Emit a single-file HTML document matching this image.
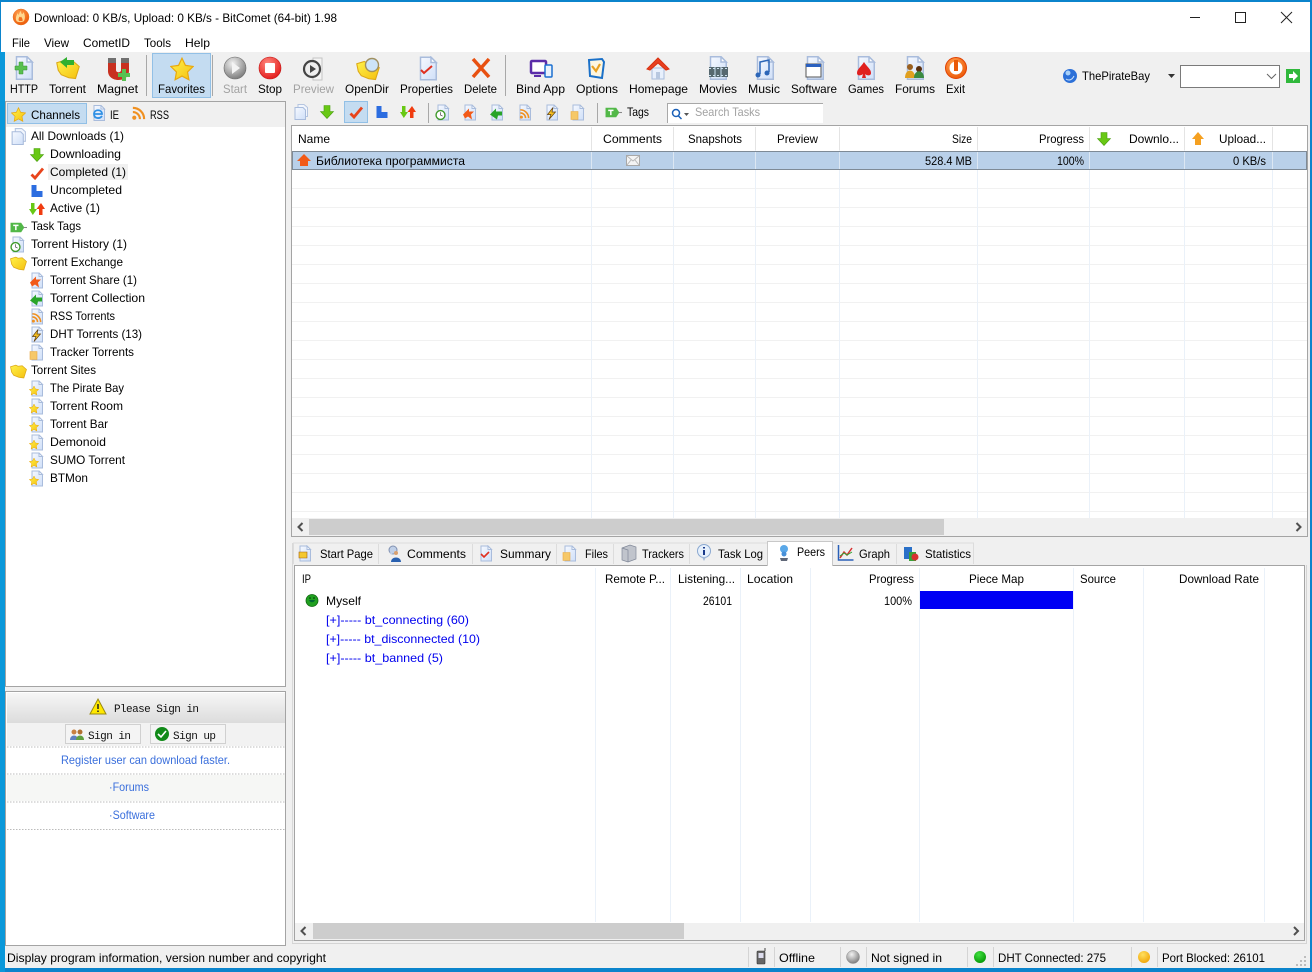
<!DOCTYPE html>
<html lang="en"><head><meta charset="utf-8"><title>BitComet</title>
<style>
html,body{margin:0;padding:0;background:#0b84cc;width:1312px;height:972px;overflow:hidden}
svg{display:block}
text{font-family:"Liberation Sans","Noto Sans CJK SC",sans-serif;font-size:12px;fill:#000}
.g{fill:#a2a2a2}
.b{fill:#0000ee}
.l{fill:#3a6fdc;font-family:"Liberation Sans",sans-serif;font-size:12px}
.m{font-family:"Liberation Mono","Liberation Sans",monospace;font-size:11px;fill:#111}
</style></head><body>
<svg xmlns="http://www.w3.org/2000/svg" width="1312" height="972" viewBox="0 0 1312 972">
<defs>
<linearGradient id="hd" x1="0" y1="0" x2="0" y2="1"><stop offset="0" stop-color="#f6f6f6"/><stop offset="1" stop-color="#dcdcdc"/></linearGradient>
<linearGradient id="pf" x1="0" y1="0" x2="1" y2="1"><stop offset="0" stop-color="#f6f9ff"/><stop offset="1" stop-color="#cfdff8"/></linearGradient>
<radialGradient id="rg" cx=".4" cy=".3" r=".8"><stop offset="0" stop-color="#f2f2f2"/><stop offset="1" stop-color="#6e6e6e"/></radialGradient>
<radialGradient id="rr" cx=".4" cy=".3" r=".8"><stop offset="0" stop-color="#ff8a80"/><stop offset="1" stop-color="#e01010"/></radialGradient>
<radialGradient id="ro" cx=".4" cy=".3" r=".8"><stop offset="0" stop-color="#ffa050"/><stop offset="1" stop-color="#ea5200"/></radialGradient>
<radialGradient id="ry" cx=".4" cy=".3" r=".8"><stop offset="0" stop-color="#ffe060"/><stop offset="1" stop-color="#f0a000"/></radialGradient>
<radialGradient id="rn" cx=".4" cy=".3" r=".8"><stop offset="0" stop-color="#40e040"/><stop offset="1" stop-color="#009000"/></radialGradient>
<linearGradient id="fy" x1="0" y1="0" x2="1" y2="1"><stop offset="0" stop-color="#fff24a"/><stop offset="1" stop-color="#f5c010"/></linearGradient>
<symbol id="pg" viewBox="0 0 16 16"><path d="M3 .5h7l3.500 3.500v11.500H3z" fill="url(#pf)" stroke="#a9bcdc"/><path d="M10 .5V4h3.500z" fill="#fff" stroke="#a9bcdc"/></symbol>
<symbol id="pg2" viewBox="0 0 16 16"><path d="M5 .5h6l3.500 3v9H5z" fill="#f2f6fd" stroke="#b5c5e0"/><path d="M2 3.500h8l2.500 2.500v9.500H2z" fill="url(#pf)" stroke="#a9bcdc"/></symbol>
<symbol id="dn" viewBox="0 0 16 16"><path d="M5 1.500h6v6h3.500L8 14.500 1.500 7.500H5z" fill="#68c814" stroke="#4a9e10" stroke-width=".6"/></symbol>
<symbol id="up" viewBox="0 0 16 16"><path d="M5 14.500h6v-6h3.500L8 1.500 1.500 8.500H5z" fill="#ff5a10" stroke="#d84000" stroke-width=".6"/></symbol>
<symbol id="chk" viewBox="0 0 16 16"><path d="M2.500 9.500l3.500 3.500L14 3.500" fill="none" stroke="#e8441c" stroke-width="2.800"/></symbol>
<symbol id="blk" viewBox="0 0 16 16"><path d="M2.500 2h5v6h6v6h-11z" fill="#2c6de0"/></symbol>
<symbol id="ar2" viewBox="0 0 16 16"><path d="M2 2h3.500v6H8L3.800 14 0 8h2z" fill="#68c814"/><path d="M10 14h3.500V8H16l-4-6-4.500 6H10z" fill="#f03c10"/></symbol>
<symbol id="star" viewBox="0 0 16 16"><path d="M8 .8l2.300 4.800 5.200.7-3.800 3.700.9 5.200L8 12.700l-4.600 2.500.9-5.200L.5 6.300l5.200-.7z" fill="url(#fy)" stroke="#e8a810" stroke-width=".8"/></symbol>
<symbol id="fold" viewBox="0 0 16 16"><path d="M.5 4.500l5-1.500 2 1 4-.5L15.500 7l-2.500 8-4.500-.5-5-2-2-3z" fill="url(#fy)" stroke="#dca818" stroke-width=".7"/></symbol>
<symbol id="tag" viewBox="0 0 16 16"><path d="M.5 3.500h10l3 4.500-3 4.500H.5z" fill="#52b848"/><path d="M3 6h5M5.500 6v4.500" stroke="#fff" stroke-width="1.400"/><path d="M13 8h3" stroke="#888"/></symbol>
<symbol id="clk" viewBox="0 0 16 16"><circle cx="8" cy="8" r="6.500" fill="#fff" stroke="#3f9a2a" stroke-width="2"/><path d="M8 4v4l3 1.500" fill="none" stroke="#444"/></symbol>
<symbol id="rss" viewBox="0 0 16 16"><circle cx="3.500" cy="12.500" r="2.200" fill="#f09020"/><path d="M2 6.500a7.500 7.500 0 0 1 7.500 7.500M2 2a12 12 0 0 1 12 12" fill="none" stroke="#f09020" stroke-width="2.300"/></symbol>
<symbol id="pgclk" viewBox="0 0 16 16"><use href="#pg"/><use href="#clk" x="0" y="5" width="11" height="11"/></symbol>
<symbol id="pgsh" viewBox="0 0 16 16"><use href="#pg"/><path d="M1 10l6-6v3h5l-3 3 1 5-4-3-3 2z" fill="#f25a18"/></symbol>
<symbol id="pgco" viewBox="0 0 16 16"><use href="#pg"/><path d="M1 10l6-6v3h6v4H9l-1 4z" fill="#28a428"/></symbol>
<symbol id="pgrs" viewBox="0 0 16 16"><use href="#pg"/><use href="#rss" x="2" y="4" width="11" height="11"/></symbol>
<symbol id="pgbo" viewBox="0 0 16 16"><use href="#pg"/><path d="M9 3L3.500 10H7L5 15l6.500-7.500H8z" fill="#f6c020" stroke="#604010" stroke-width=".7"/></symbol>
<symbol id="pgtr" viewBox="0 0 16 16"><use href="#pg"/><path d="M1 7h7v8H1z" fill="#f6c868" stroke="#e8a840" stroke-width=".6"/></symbol>
<symbol id="pgst" viewBox="0 0 16 16"><use href="#pg"/><use href="#star" x="0" y="5" width="10" height="10"/></symbol>
</defs>

<!-- window -->
<rect width="1312" height="972" fill="#0b84cc"/>
<rect x="0" y="50" width="5" height="922" fill="#0a98da"/>
<rect x="1" y="2" width="1309" height="50" fill="#fff"/>
<rect x="5" y="52" width="1305" height="916" fill="#f0f0f0"/>

<!-- title -->
<circle cx="21" cy="17" r="8" fill="url(#ro)" stroke="#e87020" stroke-width=".5"/>
<path d="M16.500 21c-1.500-3 0-5 1-8 .5 1.500 1 2 1.500 1.500.5-2 1-3 2-3.500 0 2 .5 3 1.500 3 .5-1 1-1.500 1-2 1.500 3 2 6 .5 9-2 1.500-6 1.500-7.500 0z" fill="#ffd890"/>
<path d="M19 21c-1-2 0-3 .5-4.500.5 1 1 1 1.500 0 .5 1 2 2 1.500 4.500z" fill="#f27020"/>
<text x="34" y="22" textLength="303" lengthAdjust="spacingAndGlyphs">Download: 0 KB/s, Upload: 0 KB/s - BitComet (64-bit) 1.98</text>
<path d="M1190 17.500h10" stroke="#222"/>
<rect x="1235.500" y="12.500" width="10" height="10" fill="none" stroke="#222"/>
<path d="M1281 12l11 11M1292 12l-11 11" stroke="#222"/>

<!-- menu -->
<text x="12" y="47" textLength="18" lengthAdjust="spacingAndGlyphs">File</text>
<text x="44" y="47" textLength="25" lengthAdjust="spacingAndGlyphs">View</text>
<text x="83" y="47" textLength="47" lengthAdjust="spacingAndGlyphs">CometID</text>
<text x="144" y="47" textLength="27" lengthAdjust="spacingAndGlyphs">Tools</text>
<text x="185" y="47" textLength="25" lengthAdjust="spacingAndGlyphs">Help</text>

<!-- main toolbar -->
<rect x="152.500" y="53.500" width="58" height="44" fill="#c4dcf1" stroke="#92c0e6"/>
<path d="M146.500 55v41M212.500 55v41M505.500 55v41" stroke="#a8a8a8"/>
<use href="#pg" x="12" y="56" width="24" height="24"/>
<path d="M19 62h4v4h4v4h-4v4h-4v-4h-4v-4h4z" fill="#58c050" stroke="#389030" stroke-width=".5"/>
<use href="#fold" x="56" y="56" width="24" height="24"/>
<path d="M60 62l7-5v3h7v5h-7v3z" fill="#30b030"/>
<path d="M108 58h8v12c0 3 5 3 5 0V58h8v13c0 12-21 12-21 0z" fill="#c83020"/>
<path d="M108 58h8v5h-8zM121 58h8v5h-8z" fill="#707070"/>
<path d="M122 69h4v4h4v4h-4v4h-4v-4h-4v-4h4z" fill="#58c050"/>
<use href="#star" x="170" y="57" width="24" height="24"/>
<circle cx="235" cy="68" r="11" fill="url(#rg)" stroke="#666" stroke-width=".6"/>
<path d="M232 62l8 6-8 6z" fill="#f4f4f4"/>
<circle cx="270" cy="68" r="11" fill="url(#rr)" stroke="#c01010" stroke-width=".6"/>
<rect x="265" y="63" width="10" height="10" rx="1" fill="#fff"/>
<path d="M313 58h9v22h-9z" fill="#f4f4f4" stroke="#c4c4c4"/>
<circle cx="312" cy="69" r="8" fill="#eee" stroke="#444" stroke-width="2.200"/>
<path d="M310 65l6 4-6 4z" fill="#444"/>
<use href="#fold" x="356" y="57" width="24" height="24"/>
<circle cx="372" cy="65" r="6.500" fill="#cde4f8" stroke="#a09060" stroke-width="1.400"/>
<use href="#pg" x="416" y="56" width="24" height="25"/>
<path d="M421 70l3 3 8-7" fill="none" stroke="#e03020" stroke-width="2"/>
<path d="M473 59l16 18M489 59l-16 18" stroke="#e85010" stroke-width="3.500"/>
<rect x="531" y="61" width="15" height="12" rx="1" fill="#fff" stroke="#5a2ca8" stroke-width="2.500"/>
<path d="M534 76h7" stroke="#5a2ca8" stroke-width="2"/>
<rect x="545" y="65" width="7" height="12" rx="1" fill="#e8f2fc" stroke="#1a6fd0" stroke-width="1.500"/>
<path d="M589 60l13-1 2 3-2 16-12-2z" fill="#fdf6e0" stroke="#1a70c8" stroke-width="2"/>
<path d="M592 66l4 5 4-7" fill="none" stroke="#e8a020" stroke-width="2.200"/>
<path d="M652 68h12v11h-12z" fill="#e8f0fc" stroke="#a9bcdc"/>
<path d="M656 72h4v7h-4z" fill="#b8c8e0"/>
<path d="M647 69l11-11 11 11-3 1-8-7-8 7z" fill="#e84020" stroke="#d83010"/>
<use href="#pg" x="706" y="56" width="24" height="24"/>
<rect x="709" y="67" width="19" height="10" fill="#56686f"/><path d="M715 67v10M721 67v10" stroke="#c8e0f0"/><path d="M709 68.500h19M709 75.500h19" stroke="#cfe2f0" stroke-dasharray="2 2"/>
<use href="#pg" x="753" y="56" width="24" height="24"/>
<path d="M760 74v-12l9-2v12" fill="none" stroke="#2c66b8" stroke-width="1.500"/><circle cx="758" cy="75" r="2.500" fill="#2c66b8"/><circle cx="767" cy="73" r="2.500" fill="#2c66b8"/>
<use href="#pg" x="803" y="56" width="24" height="24"/>
<rect x="806" y="64" width="15" height="13" fill="#fff" stroke="#555"/><rect x="806" y="64" width="15" height="3" fill="#2a60c0"/>
<use href="#pg" x="854" y="56" width="24" height="24"/>
<path d="M864 62c3 5 7 7 7 11 0 3-4 3-6 1l1 4h-4l1-4c-2 2-6 2-6-1 0-4 4-6 7-11z" fill="#e02020"/>
<use href="#pg" x="903" y="56" width="24" height="24"/>
<circle cx="910" cy="67" r="3" fill="#9a6020"/><path d="M905 78c0-10 10-10 10 0z" fill="#e0a020"/>
<circle cx="919" cy="69" r="3" fill="#5a3010"/><path d="M914 78c0-9 10-9 10 0z" fill="#3a8a40"/>
<circle cx="956" cy="68" r="10.500" fill="url(#ro)" stroke="#e04000"/>
<circle cx="956" cy="68" r="6.500" fill="#fff"/>
<rect x="954" y="60" width="4" height="11" fill="#ea5a08"/>

<text x="10" y="93" textLength="28" lengthAdjust="spacingAndGlyphs">HTTP</text>
<text x="49" y="93" textLength="37" lengthAdjust="spacingAndGlyphs">Torrent</text>
<text x="97" y="93" textLength="41" lengthAdjust="spacingAndGlyphs">Magnet</text>
<text x="158" y="93" textLength="47" lengthAdjust="spacingAndGlyphs">Favorites</text>
<text class="g" x="223" y="93" textLength="24" lengthAdjust="spacingAndGlyphs">Start</text>
<text x="258" y="93" textLength="24" lengthAdjust="spacingAndGlyphs">Stop</text>
<text class="g" x="293" y="93" textLength="41" lengthAdjust="spacingAndGlyphs">Preview</text>
<text x="345" y="93" textLength="44" lengthAdjust="spacingAndGlyphs">OpenDir</text>
<text x="400" y="93" textLength="53" lengthAdjust="spacingAndGlyphs">Properties</text>
<text x="464" y="93" textLength="33" lengthAdjust="spacingAndGlyphs">Delete</text>
<text x="516" y="93" textLength="49" lengthAdjust="spacingAndGlyphs">Bind App</text>
<text x="576" y="93" textLength="42" lengthAdjust="spacingAndGlyphs">Options</text>
<text x="629" y="93" textLength="59" lengthAdjust="spacingAndGlyphs">Homepage</text>
<text x="699" y="93" textLength="38" lengthAdjust="spacingAndGlyphs">Movies</text>
<text x="748" y="93" textLength="32" lengthAdjust="spacingAndGlyphs">Music</text>
<text x="791" y="93" textLength="46" lengthAdjust="spacingAndGlyphs">Software</text>
<text x="848" y="93" textLength="36" lengthAdjust="spacingAndGlyphs">Games</text>
<text x="895" y="93" textLength="40" lengthAdjust="spacingAndGlyphs">Forums</text>
<text x="946" y="93" textLength="19" lengthAdjust="spacingAndGlyphs">Exit</text>

<!-- search engine -->
<circle cx="1070" cy="76" r="7" fill="#2c70d8"/><circle cx="1068" cy="73" r="2.500" fill="#a8d0f8"/><path d="M1066 79c3 2 6 1 8-3" fill="none" stroke="#cfe4fa"/>
<text x="1082" y="80" textLength="68" lengthAdjust="spacingAndGlyphs">ThePirateBay</text>
<path d="M1168 74h7l-3.500 4z" fill="#333"/>
<rect x="1180.500" y="65.500" width="99" height="22" fill="#fff" stroke="#7a7a7a"/>
<path d="M1267 74l4.500 4.500 4.500-4.500" fill="none" stroke="#666"/>
<rect x="1286" y="69" width="14" height="14" fill="#30b83c"/>
<path d="M1289 74h4v-3l5 5-5 5v-3h-4z" fill="#fff"/>

<!-- left panel -->
<rect x="5.500" y="101.500" width="280" height="585" fill="#f0f0f0" stroke="#a4a4a4"/>
<rect x="6" y="127" width="279" height="559" fill="#fff"/>
<rect x="7.500" y="103.500" width="79" height="20" fill="#c4dcf1" stroke="#92c0e6"/>
<use href="#star" x="11" y="107" width="15" height="15"/>
<text x="31" y="119" textLength="49" lengthAdjust="spacingAndGlyphs">Channels</text>
<use href="#pg" x="91" y="105" width="16" height="16"/>
<path d="M94 114h8c0-5-8-5-8 0 0 5 6 5 8 2" fill="none" stroke="#2f90e4" stroke-width="1.800"/>
<text x="110" y="119" textLength="9" lengthAdjust="spacingAndGlyphs">IE</text>
<use href="#rss" x="131" y="106" width="15" height="15"/>
<text x="150" y="119" textLength="19" lengthAdjust="spacingAndGlyphs">RSS</text>

<!-- tree -->
<rect x="48" y="164" width="80" height="16" fill="#f0f0f0"/>
<use href="#pg2" x="10" y="128" width="17" height="17"/>
<use href="#dn" x="29" y="147" width="16" height="16"/>
<use href="#chk" x="29" y="165" width="16" height="16"/>
<use href="#blk" x="29" y="183" width="16" height="16"/>
<use href="#ar2" x="29" y="201" width="16" height="16"/>
<use href="#tag" x="10" y="219" width="17" height="17"/>
<use href="#pgclk" x="10" y="236" width="16" height="17"/>
<use href="#fold" x="10" y="254" width="17" height="17"/>
<use href="#pgsh" x="29" y="272" width="16" height="17"/>
<use href="#pgco" x="29" y="290" width="16" height="17"/>
<use href="#pgrs" x="29" y="308" width="16" height="17"/>
<use href="#pgbo" x="29" y="326" width="16" height="17"/>
<use href="#pgtr" x="29" y="344" width="16" height="17"/>
<use href="#fold" x="10" y="362" width="17" height="17"/>
<use href="#pgst" x="29" y="380" width="16" height="17"/>
<use href="#pgst" x="29" y="398" width="16" height="17"/>
<use href="#pgst" x="29" y="416" width="16" height="17"/>
<use href="#pgst" x="29" y="434" width="16" height="17"/>
<use href="#pgst" x="29" y="452" width="16" height="17"/>
<use href="#pgst" x="29" y="470" width="16" height="17"/>
<text x="31" y="140" textLength="93" lengthAdjust="spacingAndGlyphs">All Downloads (1)</text>
<text x="50" y="158" textLength="71" lengthAdjust="spacingAndGlyphs">Downloading</text>
<text x="50" y="176" textLength="76" lengthAdjust="spacingAndGlyphs">Completed (1)</text>
<text x="50" y="194" textLength="72" lengthAdjust="spacingAndGlyphs">Uncompleted</text>
<text x="50" y="212" textLength="50" lengthAdjust="spacingAndGlyphs">Active (1)</text>
<text x="31" y="230" textLength="50" lengthAdjust="spacingAndGlyphs">Task Tags</text>
<text x="31" y="248" textLength="96" lengthAdjust="spacingAndGlyphs">Torrent History (1)</text>
<text x="31" y="266" textLength="92" lengthAdjust="spacingAndGlyphs">Torrent Exchange</text>
<text x="50" y="284" textLength="87" lengthAdjust="spacingAndGlyphs">Torrent Share (1)</text>
<text x="50" y="302" textLength="95" lengthAdjust="spacingAndGlyphs">Torrent Collection</text>
<text x="50" y="320" textLength="65" lengthAdjust="spacingAndGlyphs">RSS Torrents</text>
<text x="50" y="338" textLength="92" lengthAdjust="spacingAndGlyphs">DHT Torrents (13)</text>
<text x="50" y="356" textLength="84" lengthAdjust="spacingAndGlyphs">Tracker Torrents</text>
<text x="31" y="374" textLength="65" lengthAdjust="spacingAndGlyphs">Torrent Sites</text>
<text x="50" y="392" textLength="74" lengthAdjust="spacingAndGlyphs">The Pirate Bay</text>
<text x="50" y="410" textLength="73" lengthAdjust="spacingAndGlyphs">Torrent Room</text>
<text x="50" y="428" textLength="58" lengthAdjust="spacingAndGlyphs">Torrent Bar</text>
<text x="50" y="446" textLength="56" lengthAdjust="spacingAndGlyphs">Demonoid</text>
<text x="50" y="464" textLength="75" lengthAdjust="spacingAndGlyphs">SUMO Torrent</text>
<text x="50" y="482" textLength="38" lengthAdjust="spacingAndGlyphs">BTMon</text>

<!-- lower-left panel -->
<rect x="5.500" y="691.500" width="280" height="254" fill="#fff" stroke="#a4a4a4"/>
<rect x="7" y="693" width="278" height="30" fill="url(#hd)"/>
<rect x="7" y="723" width="278" height="23" fill="#f2f2f2"/>
<path d="M98 699l8 15H90z" fill="#ffe800" stroke="#9a8a10"/><path d="M98 704v5M98 710.500v1.500" stroke="#222" stroke-width="1.500"/>
<text class="m" x="114" y="712" textLength="85" lengthAdjust="spacing">Please Sign in</text>
<rect x="65.500" y="724.500" width="75" height="19" fill="#f4f4f4" stroke="#d0d0d0"/>
<rect x="150.500" y="724.500" width="75" height="19" fill="#f4f4f4" stroke="#d0d0d0"/>
<circle cx="74" cy="732" r="2.500" fill="#c88040"/><path d="M70 740c0-6 8-6 8 0z" fill="#6080c0"/>
<circle cx="80" cy="732" r="2.500" fill="#b07030"/><path d="M76 740c0-6 8-6 8 0z" fill="#60a040"/>
<circle cx="162" cy="734" r="7" fill="#108a18"/><path d="M158 734l3 3 5-6" fill="none" stroke="#fff" stroke-width="1.600"/>
<text class="m" x="88" y="739" textLength="43" lengthAdjust="spacing">Sign in</text>
<text class="m" x="173" y="739" textLength="43" lengthAdjust="spacing">Sign up</text>
<rect x="7" y="775" width="278" height="26" fill="#f6f7f5"/>
<path d="M7 747h278M7 774h278M7 802h278M7 829.500h278" stroke="#bbb" stroke-dasharray="1.500 1.500"/>
<text class="l" x="61" y="764" textLength="169" lengthAdjust="spacingAndGlyphs">Register user can download faster.</text>
<text class="l" x="109" y="791" textLength="40" lengthAdjust="spacingAndGlyphs">·Forums</text>
<text class="l" x="109" y="819" textLength="46" lengthAdjust="spacingAndGlyphs">·Software</text>

<!-- second toolbar -->
<rect x="344.500" y="101.500" width="23" height="21" fill="#c4dcf1" stroke="#92c0e6"/>
<use href="#pg2" x="293" y="104" width="16" height="16"/>
<use href="#dn" x="319" y="104" width="16" height="16"/>
<use href="#chk" x="348" y="104" width="16" height="16"/>
<use href="#blk" x="374" y="104" width="16" height="16"/>
<use href="#ar2" x="400" y="104" width="16" height="16"/>
<path d="M428.500 103v20M597.500 103v20" stroke="#a8a8a8"/>
<use href="#pgclk" x="435" y="104" width="16" height="17"/>
<use href="#pgsh" x="462" y="104" width="16" height="17"/>
<use href="#pgco" x="489" y="104" width="16" height="17"/>
<use href="#pgrs" x="517" y="104" width="16" height="17"/>
<use href="#pgbo" x="544" y="104" width="16" height="17"/>
<use href="#pgtr" x="570" y="104" width="16" height="17"/>
<use href="#tag" x="605" y="104" width="17" height="17"/>
<text x="627" y="116" textLength="22" lengthAdjust="spacingAndGlyphs">Tags</text>
<rect x="667" y="103" width="156" height="20" fill="#fff"/>
<path d="M667.500 123v-19.500H823" fill="none" stroke="#a8a8a8"/>
<circle cx="676" cy="113" r="3.500" fill="none" stroke="#1a60b8" stroke-width="1.500"/><path d="M678.500 116l3 3" stroke="#1a60b8" stroke-width="1.500"/>
<path d="M684 113h5l-2.500 3z" fill="#555"/>
<text class="g" x="695" y="116" textLength="65" lengthAdjust="spacingAndGlyphs">Search Tasks</text>

<!-- task list -->
<rect x="291.500" y="125.500" width="1016" height="411" fill="#fff" stroke="#a4a4a4"/>
<g stroke="#f1f1f1"><path d="M292 169.500h1015M292 188.500h1015M292 207.500h1015M292 226.500h1015M292 245.500h1015M292 264.500h1015M292 283.500h1015M292 302.500h1015M292 321.500h1015M292 340.500h1015M292 359.500h1015M292 378.500h1015M292 397.500h1015M292 416.500h1015M292 435.500h1015M292 454.500h1015M292 473.500h1015M292 492.500h1015M292 511.500h1015"/></g>
<g stroke="#eaf1f9"><path d="M591.500 150v368M673.500 150v368M755.500 150v368M839.500 150v368M977.500 150v368M1089.500 150v368M1184.500 150v368M1272.500 150v368"/></g>
<g stroke="#e4e4e4"><path d="M591.500 127v23M673.500 127v23M755.500 127v23M839.500 127v23M977.500 127v23M1089.500 127v23M1184.500 127v23M1272.500 127v23"/></g>
<rect x="292" y="151" width="1015" height="19" fill="#b9d0e9"/>
<path d="M292.500 151.500h1014v18h-1014z" fill="none" stroke="#444" stroke-dasharray="1 1"/>
<path d="M591.500 152v17M673.500 152v17M755.500 152v17M839.500 152v17M977.500 152v17M1089.500 152v17M1184.500 152v17M1272.500 152v17" stroke="#dce7f3"/>
<text x="298" y="143" textLength="32" lengthAdjust="spacingAndGlyphs">Name</text>
<text x="603" y="143" textLength="59" lengthAdjust="spacingAndGlyphs">Comments</text>
<text x="688" y="143" textLength="54" lengthAdjust="spacingAndGlyphs">Snapshots</text>
<text x="777" y="143" textLength="41" lengthAdjust="spacingAndGlyphs">Preview</text>
<text x="952" y="143" textLength="20" lengthAdjust="spacingAndGlyphs">Size</text>
<text x="1039" y="143" textLength="45" lengthAdjust="spacingAndGlyphs">Progress</text>
<use href="#dn" x="1096" y="131" width="16" height="16"/>
<text x="1129" y="143" textLength="50" lengthAdjust="spacingAndGlyphs">Downlo...</text>
<path d="M1195 145h6v-6h3l-6-7-6 7h3z" fill="#f5a020"/>
<text x="1219" y="143" textLength="47" lengthAdjust="spacingAndGlyphs">Upload...</text>
<path d="M297 161l7-7 7 7h-3v5h-8v-5z" fill="#f25a18"/>
<text x="316" y="165" textLength="149" lengthAdjust="spacingAndGlyphs">Библиотека программиста</text>
<rect x="626.500" y="155.500" width="13" height="10" fill="#f4f4f4" stroke="#a8a8a8"/><path d="M627 156l6 5 6-5M627 165l4-5M639 165l-4-5" fill="none" stroke="#b8b8b8"/>
<text x="925" y="165" textLength="47" lengthAdjust="spacingAndGlyphs">528.4 MB</text>
<text x="1057" y="165" textLength="27" lengthAdjust="spacingAndGlyphs">100%</text>
<text x="1233" y="165" textLength="33" lengthAdjust="spacingAndGlyphs">0 KB/s</text>
<!-- list scrollbar -->
<rect x="292" y="518" width="1015" height="18" fill="#f0f0f0"/>
<rect x="309" y="519" width="635" height="16" fill="#cdcdcd"/>
<path d="M302.500 523l-4 4 4 4M1296.500 523l4 4-4 4" fill="none" stroke="#505050" stroke-width="2"/>

<!-- tabs -->
<path d="M292.500 543v400" stroke="#d8d8d8"/>
<path d="M293.500 564v-21h680v21" fill="#f0f0f0" stroke="#dcdcdc"/>
<path d="M378.500 544v20M472.500 544v20M556.500 544v20M613.500 544v20M689.500 544v20M896.500 544v20" stroke="#dcdcdc"/>
<rect x="294.500" y="565.500" width="1010" height="375" fill="#fff" stroke="#a4a4a4"/>
<path d="M1306.500 565v378.500H292" fill="none" stroke="#d4d4d4"/>
<rect x="767.500" y="541.500" width="65" height="24" fill="#fff" stroke="#c8c8c8"/>
<rect x="768" y="564" width="64" height="3" fill="#fff"/>
<use href="#pg" x="297" y="545" width="16" height="17"/><path d="M299 552h8v6h-8z" fill="#f4c830" stroke="#a06010" stroke-width=".6"/>
<circle cx="393" cy="550" r="4" fill="#c0d0e8" stroke="#8090b0"/><path d="M390 552l1 3 2-2z" fill="#c0d0e8"/><circle cx="396" cy="553" r="2" fill="#d8a070"/><path d="M391 562c0-6 10-6 10 0z" fill="#2860b0"/>
<use href="#pg" x="478" y="545" width="16" height="17"/><path d="M481 554l3 3 5-5" fill="none" stroke="#e03020" stroke-width="1.600"/>
<use href="#pgtr" x="562" y="545" width="16" height="17"/>
<path d="M622 548l8-3 6 2v12l-8 3-6-2z" fill="#c0c4cc" stroke="#808898" stroke-width=".7"/><path d="M622 548l6 2v12" fill="none" stroke="#808898" stroke-width=".7"/>
<circle cx="704" cy="551" r="6.500" fill="#e6f0fc" stroke="#8aa8d0"/><path d="M704 547v1.500M704 550v5" stroke="#1a3a8a" stroke-width="2"/><path d="M702 557l2 4 2-4z" fill="#a0b8d8"/>
<circle cx="784" cy="549" r="4" fill="#5aa8e8"/><circle cx="784" cy="554" r="2.500" fill="#4890d8"/><path d="M780 558h8l-1 3h-6z" fill="#606878"/>
<path d="M838.500 545v15h15" fill="none" stroke="#2a60b8" stroke-width="1.500"/><path d="M840 558l4-6 3 3 5-7" fill="none" stroke="#d83030" stroke-width="1.500"/><path d="M840 556l4-3 3 2 5-3" fill="none" stroke="#30a030"/>
<rect x="904" y="547" width="8" height="12" fill="#2a70c8"/><rect x="909" y="552" width="7" height="9" fill="#38a038"/><circle cx="915" cy="557" r="3.500" fill="#d83030"/>
<text x="320" y="558" textLength="53" lengthAdjust="spacingAndGlyphs">Start Page</text>
<text x="407" y="558" textLength="59" lengthAdjust="spacingAndGlyphs">Comments</text>
<text x="500" y="558" textLength="51" lengthAdjust="spacingAndGlyphs">Summary</text>
<text x="585" y="558" textLength="23" lengthAdjust="spacingAndGlyphs">Files</text>
<text x="642" y="558" textLength="42" lengthAdjust="spacingAndGlyphs">Trackers</text>
<text x="718" y="558" textLength="45" lengthAdjust="spacingAndGlyphs">Task Log</text>
<text x="797" y="556" textLength="28" lengthAdjust="spacingAndGlyphs">Peers</text>
<text x="859" y="558" textLength="31" lengthAdjust="spacingAndGlyphs">Graph</text>
<text x="925" y="558" textLength="46" lengthAdjust="spacingAndGlyphs">Statistics</text>

<!-- peers -->
<path d="M595.500 568v354M670.500 568v354M740.500 568v354M810.500 568v354M919.500 568v354M1073.500 568v354M1143.500 568v354M1264.500 568v354" stroke="#eaf1f9"/>
<text x="302" y="583" textLength="9" lengthAdjust="spacingAndGlyphs">IP</text>
<text x="605" y="583" textLength="60" lengthAdjust="spacingAndGlyphs">Remote P...</text>
<text x="678" y="583" textLength="57" lengthAdjust="spacingAndGlyphs">Listening...</text>
<text x="747" y="583" textLength="46" lengthAdjust="spacingAndGlyphs">Location</text>
<text x="869" y="583" textLength="45" lengthAdjust="spacingAndGlyphs">Progress</text>
<text x="969" y="583" textLength="55" lengthAdjust="spacingAndGlyphs">Piece Map</text>
<text x="1080" y="583" textLength="36" lengthAdjust="spacingAndGlyphs">Source</text>
<text x="1179" y="583" textLength="80" lengthAdjust="spacingAndGlyphs">Download Rate</text>
<circle cx="312" cy="600.500" r="6" fill="#20a020" stroke="#106810" stroke-width=".8"/><path d="M309 600c1 3 5 3 6 0" fill="#063"/><circle cx="310" cy="598" r=".8" fill="#030"/><circle cx="314" cy="598" r=".8" fill="#030"/>
<text x="326" y="605" textLength="35" lengthAdjust="spacingAndGlyphs">Myself</text>
<text x="703" y="605" textLength="29" lengthAdjust="spacingAndGlyphs">26101</text>
<text x="884" y="605" textLength="28" lengthAdjust="spacingAndGlyphs">100%</text>
<rect x="920" y="591" width="153" height="18" fill="#0000f4"/>
<text class="b" x="326" y="624" textLength="143" lengthAdjust="spacingAndGlyphs">[+]----- bt_connecting (60)</text>
<text class="b" x="326" y="643" textLength="154" lengthAdjust="spacingAndGlyphs">[+]----- bt_disconnected (10)</text>
<text class="b" x="326" y="662" textLength="117" lengthAdjust="spacingAndGlyphs">[+]----- bt_banned (5)</text>
<rect x="295" y="923" width="1009" height="17" fill="#f0f0f0"/>
<rect x="313" y="923" width="371" height="16" fill="#cdcdcd"/>
<path d="M305.500 927l-4 4 4 4M1294 927l4 4-4 4" fill="none" stroke="#505050" stroke-width="2"/>

<!-- status bar -->
<g stroke="#d4d4d4"><path d="M748.500 947v20M774.500 947v20M840.500 947v20M866.500 947v20M967.500 947v20M993.500 947v20M1131.500 947v20M1157.500 947v20"/></g>
<text x="7" y="962" textLength="319" lengthAdjust="spacingAndGlyphs">Display program information, version number and copyright</text>
<rect x="757" y="951" width="8" height="13" rx="1" fill="#666" stroke="#333" stroke-width=".6"/><rect x="758.500" y="953" width="5" height="5" fill="#dde"/><path d="M765 951v-3" stroke="#444"/>
<text x="779" y="962" textLength="36" lengthAdjust="spacingAndGlyphs">Offline</text>
<circle cx="853" cy="957" r="6.500" fill="url(#rg)" stroke="#888" stroke-width=".5"/>
<text x="871" y="962" textLength="71" lengthAdjust="spacingAndGlyphs">Not signed in</text>
<circle cx="980" cy="957" r="6" fill="url(#rn)"/>
<text x="998" y="962" textLength="108" lengthAdjust="spacingAndGlyphs">DHT Connected: 275</text>
<circle cx="1144" cy="957" r="6" fill="url(#ry)"/>
<text x="1162" y="962" textLength="103" lengthAdjust="spacingAndGlyphs">Port Blocked: 26101</text>
<g fill="#bdbdbd"><rect x="1304" y="956" width="2" height="2"/><rect x="1300" y="960" width="2" height="2"/><rect x="1304" y="960" width="2" height="2"/><rect x="1296" y="964" width="2" height="2"/><rect x="1300" y="964" width="2" height="2"/><rect x="1304" y="964" width="2" height="2"/></g>
</svg>
</body></html>
